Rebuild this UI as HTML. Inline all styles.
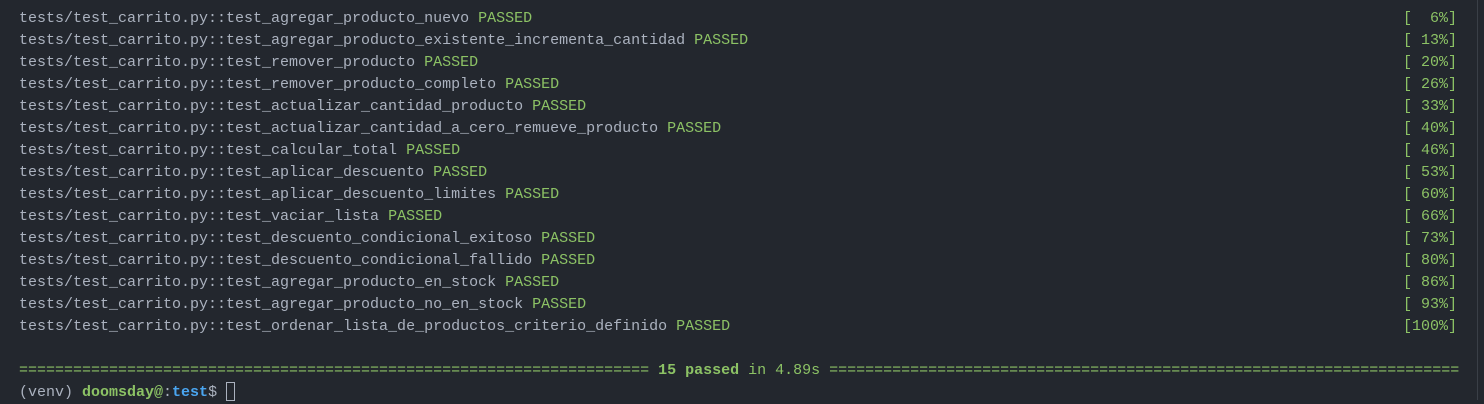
<!DOCTYPE html>
<html><head><meta charset="utf-8"><style>
html,body{margin:0;padding:0;background:#23272e;width:1484px;height:400px;overflow:hidden}
pre{margin:0;position:absolute;left:19px;top:8px;font-family:"Liberation Mono",monospace;font-size:15px;line-height:22px;color:#abb2bf;white-space:pre}
.g{color:#8cc265}.b{color:#8cc265;font-weight:bold}.bl{color:#4aa5f0;font-weight:bold}
.r{position:absolute;right:27px;top:8px;font-family:"Liberation Mono",monospace;font-size:15px;line-height:22px;color:#8cc265;white-space:pre;text-align:right;margin:0}
.sb{position:absolute;left:1477px;top:0;width:1px;height:400px;background:#3a3f47}
.cur{display:inline-block;width:9px;height:19px;border:1px solid #abb2bf;vertical-align:-5px;box-sizing:border-box;margin-left:9px}
</style></head><body>
<pre>tests/test_carrito.py::test_agregar_producto_nuevo <span class="g">PASSED</span>
tests/test_carrito.py::test_agregar_producto_existente_incrementa_cantidad <span class="g">PASSED</span>
tests/test_carrito.py::test_remover_producto <span class="g">PASSED</span>
tests/test_carrito.py::test_remover_producto_completo <span class="g">PASSED</span>
tests/test_carrito.py::test_actualizar_cantidad_producto <span class="g">PASSED</span>
tests/test_carrito.py::test_actualizar_cantidad_a_cero_remueve_producto <span class="g">PASSED</span>
tests/test_carrito.py::test_calcular_total <span class="g">PASSED</span>
tests/test_carrito.py::test_aplicar_descuento <span class="g">PASSED</span>
tests/test_carrito.py::test_aplicar_descuento_limites <span class="g">PASSED</span>
tests/test_carrito.py::test_vaciar_lista <span class="g">PASSED</span>
tests/test_carrito.py::test_descuento_condicional_exitoso <span class="g">PASSED</span>
tests/test_carrito.py::test_descuento_condicional_fallido <span class="g">PASSED</span>
tests/test_carrito.py::test_agregar_producto_en_stock <span class="g">PASSED</span>
tests/test_carrito.py::test_agregar_producto_no_en_stock <span class="g">PASSED</span>
tests/test_carrito.py::test_ordenar_lista_de_productos_criterio_definido <span class="g">PASSED</span>

<span class="g">====================================================================== <b>15 passed</b> in 4.89s ======================================================================</span>
(venv) <span class="b">doomsday@</span>:<span class="bl">test</span>$<span class="cur"></span></pre>
<pre class="r">[  6%]
[ 13%]
[ 20%]
[ 26%]
[ 33%]
[ 40%]
[ 46%]
[ 53%]
[ 60%]
[ 66%]
[ 73%]
[ 80%]
[ 86%]
[ 93%]
[100%]</pre>
<div class="sb"></div>
</body></html>
